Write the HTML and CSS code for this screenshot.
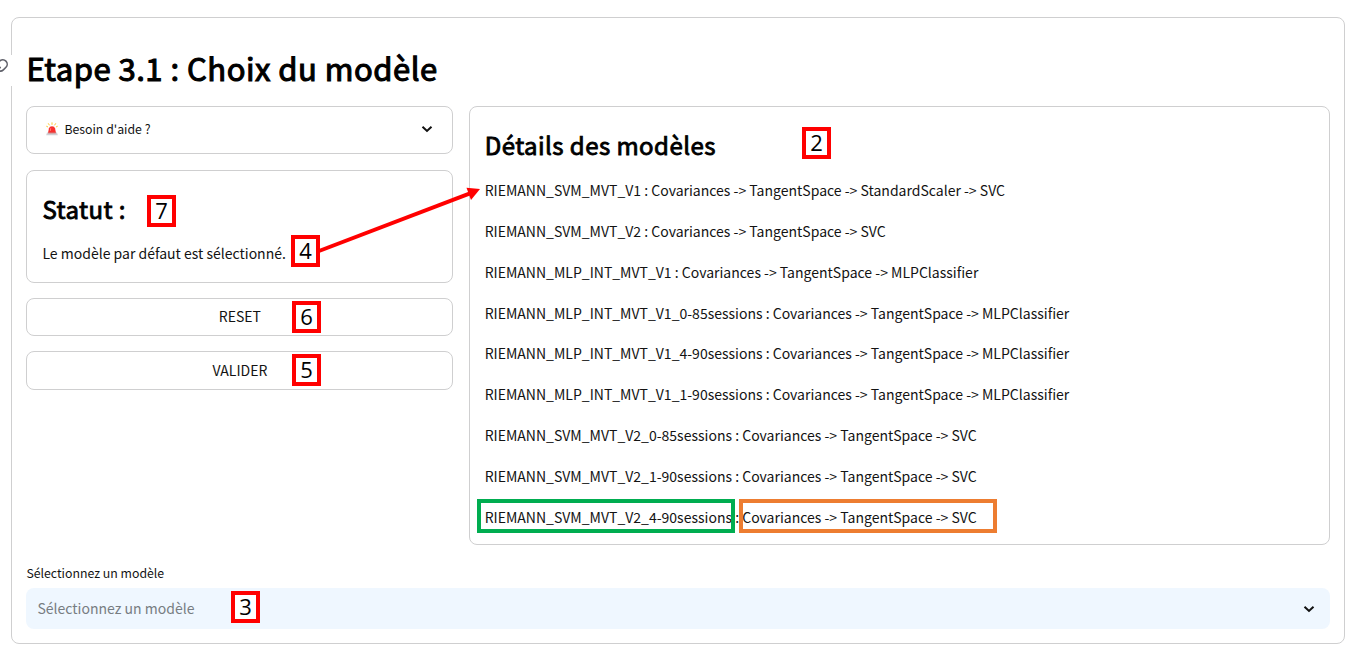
FILE: index.html
```html
<!DOCTYPE html>
<html lang="fr">
<head>
<meta charset="utf-8">
<title>Etape 3.1 : Choix du modèle</title>
<link rel="stylesheet" href="styles.css">
</head>
<body>
<main class="panel">
  <span class="anchor"><svg width="24" height="24" viewBox="0 0 24 24" fill="none" stroke="#60616a" stroke-width="1.800" stroke-linecap="round" stroke-linejoin="round"><path d="M10 13a5 5 0 0 0 7.54.54l3-3a5 5 0 0 0-7.07-7.07l-1.72 1.71"/><path d="M14 11a5 5 0 0 0-7.54-.54l-3 3a5 5 0 0 0 7.07 7.07l1.71-1.71"/></svg></span>
  <h1 class="title"><span class="t-title">Etape 3.1 : Choix du modèle</span></h1>
  <div class="columns">
    <div class="side">
      <div class="card help">
        <svg class="siren" width="12" height="14" viewBox="0 0 12 14"><path d="M2 11 3 6.200Q3.400 4.300 6 4.300t3 1.900L10 11z" fill="#f8312f"/><path d="M1 10.400h10l.8 2.800H.2z" fill="#d0cfd3"/><path d="M2.300 10.400h7.400l.1.900H2.200z" fill="#e0302e"/><path d="M4.700 6.200 4.300 9" stroke="#ff8b87" stroke-width=".8"/><path d="M6 .4v2.400M2.200 1.300l1.300 2M9.800 1.300 8.500 3.300M.3 4.200l1.700.8M11.700 4.200l-1.700.8" stroke="#fcc934" stroke-width="1"/></svg>
        <span class="t-help">Besoin d'aide ?</span>
        <svg class="chevron" width="12" height="8" viewBox="0 0 12 8"><path d="M1.500 1.800 6 6l4.500-4.200" fill="none" stroke="#111" stroke-width="2"/></svg>
      </div>
      <div class="card status">
        <h2 class="heading"><span class="t-status">Statut :</span></h2>
        <p class="message"><span class="t-message">Le modèle par défaut est sélectionné.</span></p>
      </div>
      <button class="card button reset">RESET</button>
      <button class="card button submit">VALIDER</button>
    </div>
    <section class="card details">
      <h2 class="heading"><span class="t-details">Détails des modèles</span></h2>
      <ul class="models">
        <li><span>RIEMANN_SVM_MVT_V1 : Covariances -&gt; TangentSpace -&gt; StandardScaler -&gt; SVC</span></li>
        <li><span>RIEMANN_SVM_MVT_V2 : Covariances -&gt; TangentSpace -&gt; SVC</span></li>
        <li><span>RIEMANN_MLP_INT_MVT_V1 : Covariances -&gt; TangentSpace -&gt; MLPClassifier</span></li>
        <li><span>RIEMANN_MLP_INT_MVT_V1_0-85sessions : Covariances -&gt; TangentSpace -&gt; MLPClassifier</span></li>
        <li><span>RIEMANN_MLP_INT_MVT_V1_4-90sessions : Covariances -&gt; TangentSpace -&gt; MLPClassifier</span></li>
        <li><span>RIEMANN_MLP_INT_MVT_V1_1-90sessions : Covariances -&gt; TangentSpace -&gt; MLPClassifier</span></li>
        <li><span>RIEMANN_SVM_MVT_V2_0-85sessions : Covariances -&gt; TangentSpace -&gt; SVC</span></li>
        <li><span>RIEMANN_SVM_MVT_V2_1-90sessions : Covariances -&gt; TangentSpace -&gt; SVC</span></li>
        <li><span>RIEMANN_SVM_MVT_V2_4-90sessions : Covariances -&gt; TangentSpace -&gt; SVC</span></li>
      </ul>
    </section>
  </div>
  <div class="label"><span class="t-label">Sélectionnez un modèle</span></div>
  <div class="select">
    <span class="t-placeholder">Sélectionnez un modèle</span>
    <svg class="chevron" width="12" height="8" viewBox="0 0 12 8"><path d="M1.500 1.800 6 6l4.500-4.200" fill="none" stroke="#111" stroke-width="2"/></svg>
  </div>
</main>
<svg class="arrow" width="200" height="90" viewBox="0 0 200 90"><path d="M29 71 180 13.300" stroke="#f00" stroke-width="4" fill="none"/><path d="M190 9 176.500 7.800 181 20z" fill="#f00"/></svg>
<span class="mark m2">2</span>
<span class="mark m7">7</span>
<span class="mark m4">4</span>
<span class="mark m6">6</span>
<span class="mark m5">5</span>
<span class="mark m3">3</span>
<span class="frame green"></span>
<span class="frame orange"></span>
</body>
</html>
```
FILE: styles.css
```css
* { box-sizing: border-box; }
body {
  margin: 0;
  height: 654px;
  padding: 17px 12px 10px 11px;
  position: relative;
  overflow: hidden;
  background: #fff;
  color: #131313;
  font: 14.020px/24px "Noto Sans CJK SC", "Noto Sans", sans-serif;
}
h1, h2, p, ul { margin: 0; padding: 0; }
span { white-space: nowrap; }
.panel {
  position: relative;
  height: 627px;
  padding: 0 14.500px 0 14.400px;
  border: 1px solid #cfcfd0;
  border-radius: 8px;
}
.anchor {
  position: absolute;
  left: -24px;
  top: 37px;
  width: 34px;
  height: 31px;
  padding-top: 3px;
  background: #fff;
}
.anchor svg { width: 21px; height: 21px; display: block; }
.title {
  height: 88px;
  padding-top: 29px;
  line-height: 42px;
  font-size: 31px;
  font-weight: 400;
  letter-spacing: .5px;
  -webkit-text-stroke: 1.100px #000;
  color: #000;
}
.columns {
  display: grid;
  grid-template-columns: 427px 861px;
  gap: 16px;
  height: 439px;
}
.side { display: flex; flex-direction: column; }
.card {
  border: 1px solid #cfcfd0;
  border-radius: 8px;
  background: #fff;
}
.help {
  display: flex;
  align-items: center;
  height: 48px;
  padding: 0 19px 2px;
  font-size: 12.300px;
}
.siren { margin-right: 6px; }
.chevron { margin-left: auto; }
.status { height: 113px; margin: 16px 0 15px; padding: 0 15px; }
.heading {
  font-size: 24px;
  line-height: 34px;
  font-weight: 400;
  letter-spacing: .45px;
  -webkit-text-stroke: .85px #000;
  color: #000;
}
.status .heading { padding-top: 21px; }
.message { padding-top: 15px; }
.button {
  height: 38px;
  padding: 0 0 2px;
  font: inherit;
  color: inherit;
}
.submit { margin-top: 15px; height: 39px; padding-bottom: 1px; }
.details { padding: 21px 15px 0 14.300px; }
.details .heading { height: 42.300px; }
.models { list-style: none; }
.models li { height: 40.800px; line-height: 40.800px; }
.label { height: 43px; padding-top: 16px; font-size: 12.300px; }
.select {
  display: flex;
  align-items: center;
  height: 41px;
  padding: 0 15px 2px 11px;
  border-radius: 8px;
  background: #eff7ff;
}
.select .chevron { position: relative; top: 1px; }
.t-placeholder { color: #777d82; }
.arrow { position: absolute; left: 290px; top: 180px; }
.mark {
  position: absolute;
  width: 29px;
  height: 32px;
  border: 4px solid #f00;
  background: #fff;
  color: #000;
  font: 22px/23px "Open Sans", sans-serif;
  text-align: center;
}
.m2 { left: 802px; top: 127px; }
.m7 { left: 147px; top: 195px; }
.m4 { left: 291px; top: 235px; }
.m6 { left: 292px; top: 301px; }
.m5 { left: 292px; top: 354px; }
.m3 { left: 231px; top: 591px; }
.frame { position: absolute; top: 499px; height: 34px; border: 4px solid; }
.green { left: 477px; width: 258px; border-color: #00ad50; }
.orange { left: 739px; width: 258px; border-color: #ed7d31; }
```
